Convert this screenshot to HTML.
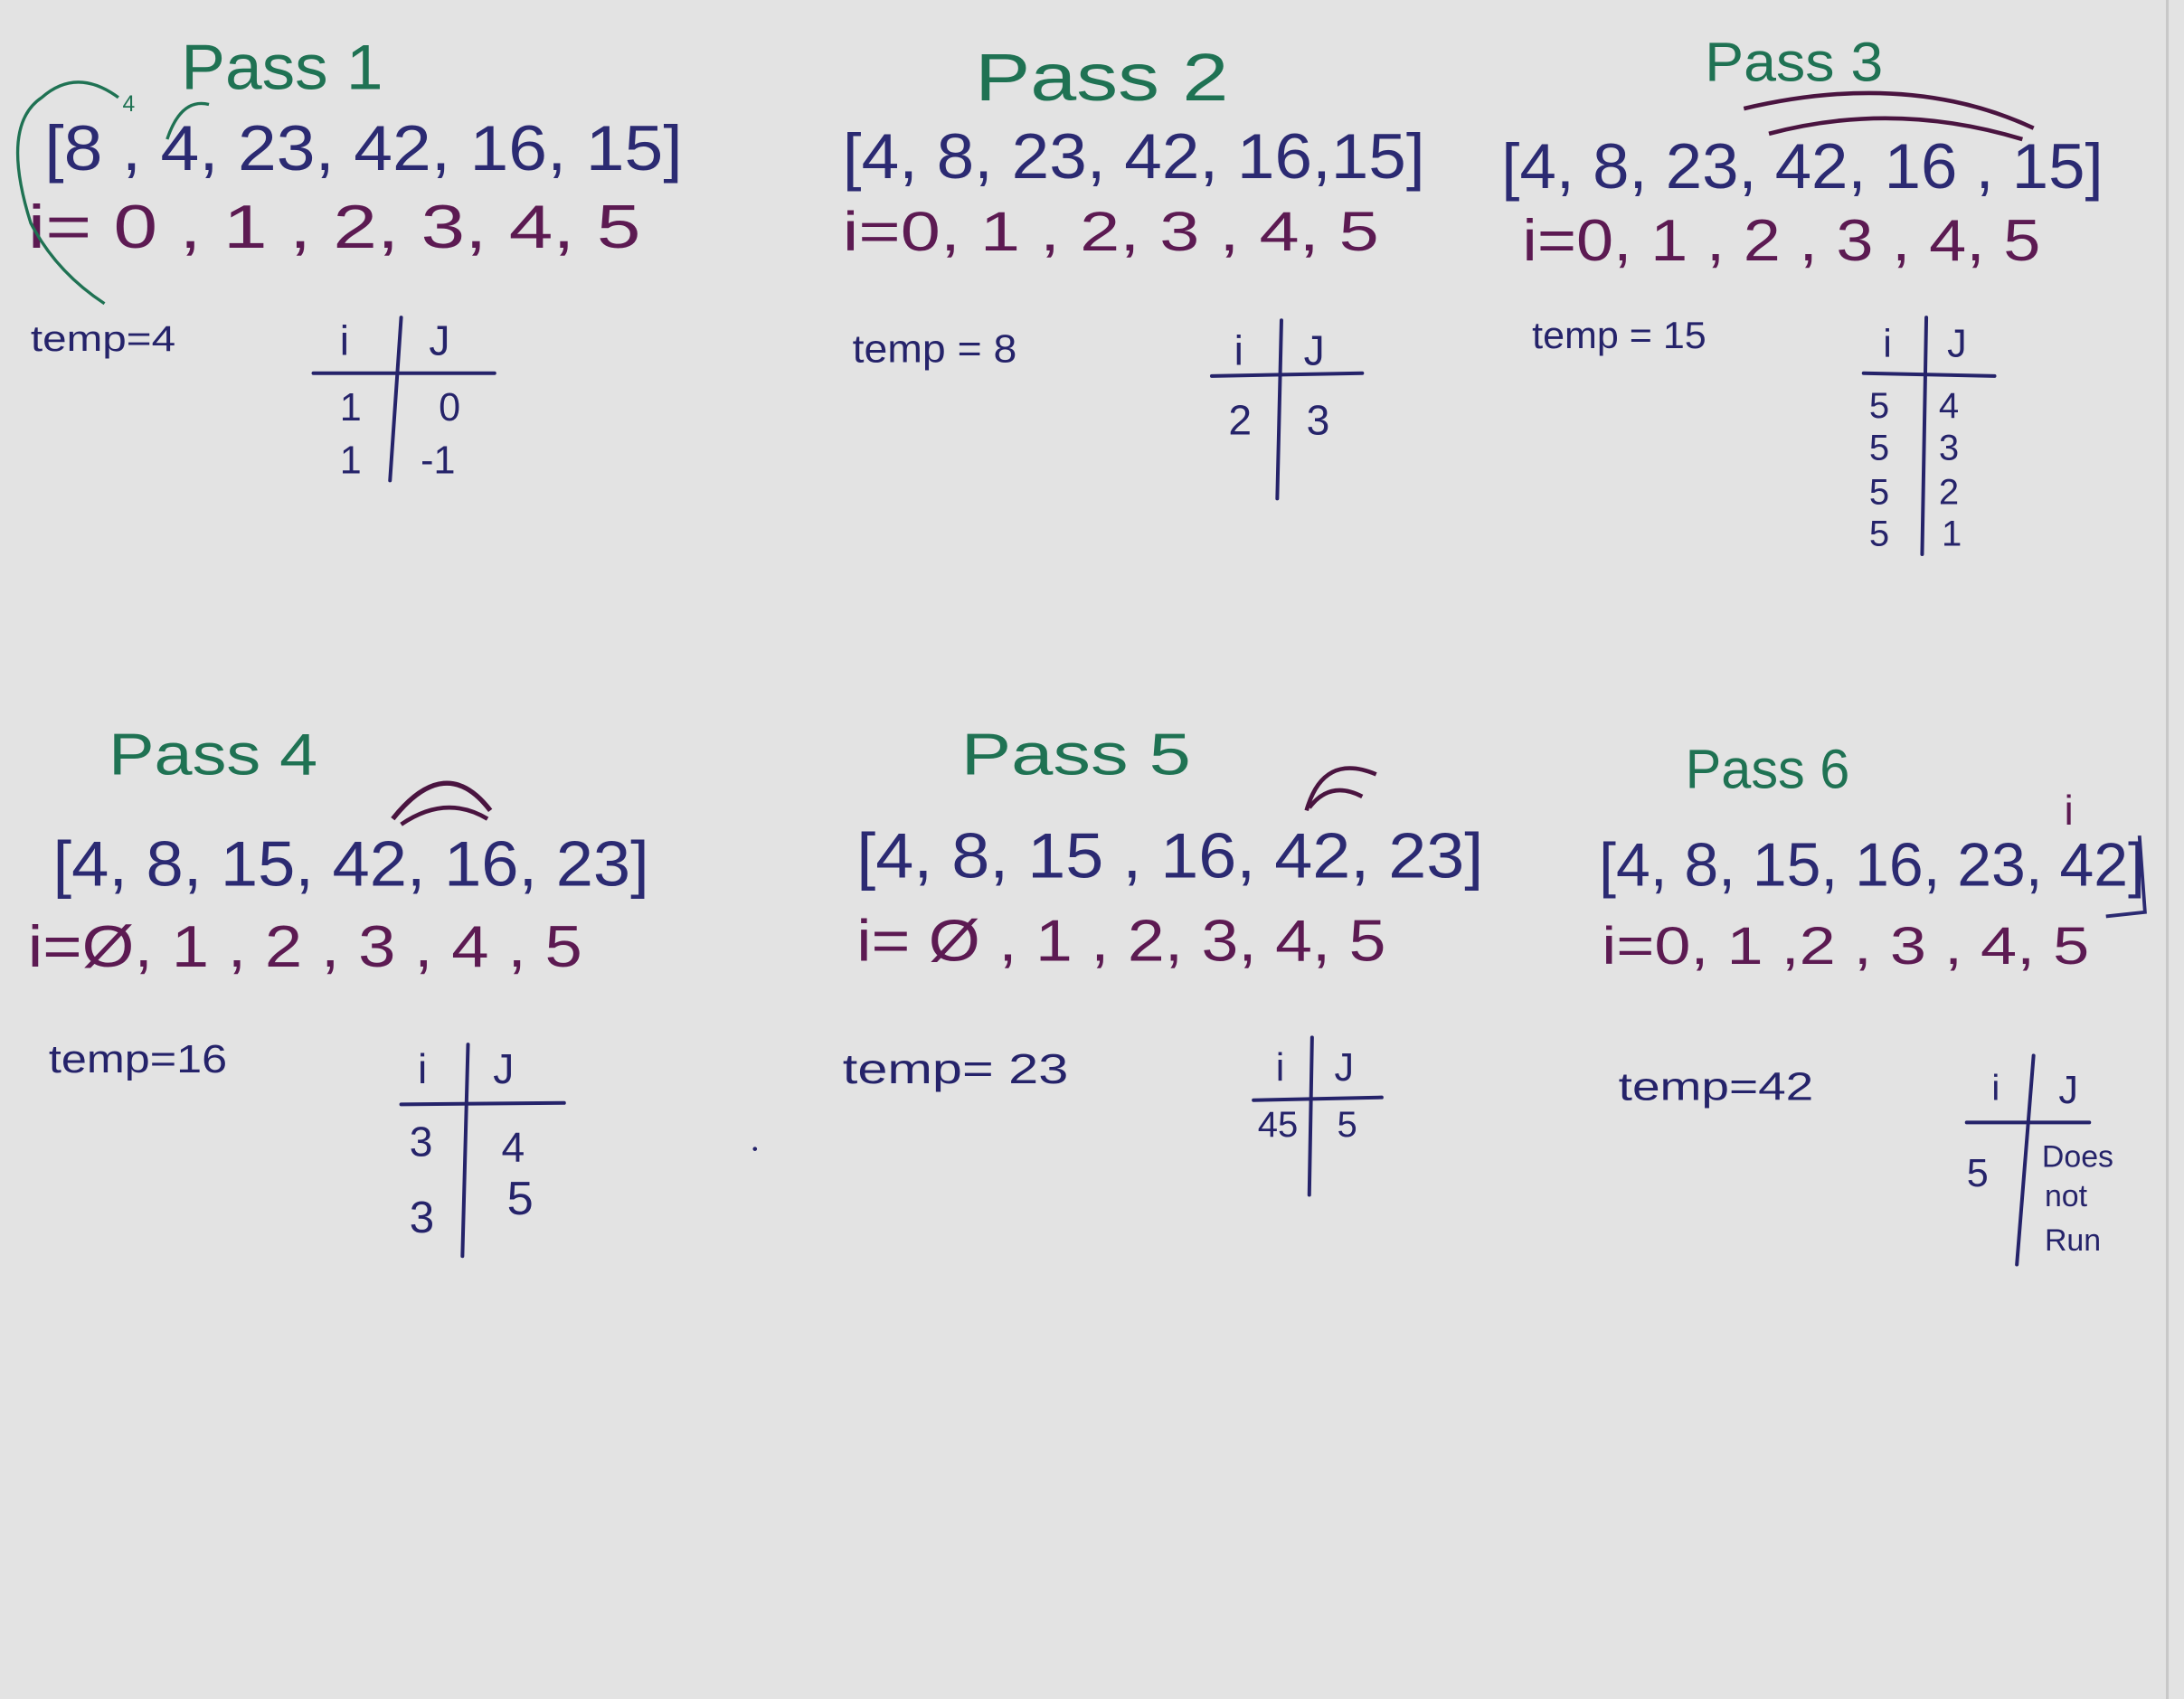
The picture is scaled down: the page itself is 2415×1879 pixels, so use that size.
<!DOCTYPE html>
<html><head><style>
html,body{margin:0;padding:0;background:#e3e3e3;overflow:hidden}
svg{display:block}
text{font-family:"Liberation Sans",sans-serif;font-weight:normal}
.g{fill:#1f7253}.b{fill:#2b2a72}.p{fill:#5c1a52}.n{fill:#25236a}
.ln{stroke:#25236a;stroke-width:2.6;fill:none;stroke-linecap:round}
</style></head><body>
<svg width="2415" height="1879" viewBox="0 0 1568 1220" xmlns="http://www.w3.org/2000/svg">
<rect width="1568" height="1220" fill="#e3e3e3"/>
<line x1="1556" y1="0" x2="1556" y2="1220" stroke="#c8c8c8" stroke-width="2"/>

<!-- Pass 1 -->
<text x="130" y="64" class="g" font-size="46" textLength="145" lengthAdjust="spacingAndGlyphs">Pass 1</text>
<text x="32" y="122" class="b" font-size="46" textLength="458" lengthAdjust="spacingAndGlyphs">[8 , 4, 23, 42, 16, 15]</text>
<text x="88" y="80" class="g" font-size="16">4</text>
<text x="20" y="178" class="p" font-size="44" textLength="440" lengthAdjust="spacingAndGlyphs">i= 0 , 1 , 2, 3, 4, 5</text>
<path d="M75 218 Q40 195 22 160 Q0 90 30 70 Q55 48 85 70" stroke="#1f7253" stroke-width="2.2" fill="none"/>
<path d="M120 100 Q130 70 150 75" stroke="#1f7253" stroke-width="2.2" fill="none"/>
<text x="22" y="252" class="n" font-size="26" textLength="104" lengthAdjust="spacingAndGlyphs">temp=4</text>
<text x="244" y="255" class="n" font-size="30">i</text><text x="308" y="255" class="n" font-size="30">J</text>
<line x1="288" y1="228" x2="280" y2="345" class="ln"/><line x1="225" y1="268" x2="355" y2="268" class="ln"/>
<text x="244" y="302" class="n" font-size="28">1</text><text x="315" y="302" class="n" font-size="28">0</text>
<text x="244" y="340" class="n" font-size="28">1</text><text x="302" y="340" class="n" font-size="28">-1</text>

<!-- Pass 2 -->
<text x="700" y="72" class="g" font-size="48" textLength="182" lengthAdjust="spacingAndGlyphs">Pass 2</text>
<text x="605" y="128" class="b" font-size="46" textLength="418" lengthAdjust="spacingAndGlyphs">[4, 8, 23, 42, 16,15]</text>
<text x="605" y="180" class="p" font-size="40" textLength="385" lengthAdjust="spacingAndGlyphs">i=0, 1 , 2, 3 , 4, 5</text>
<text x="612" y="260" class="n" font-size="28" textLength="118" lengthAdjust="spacingAndGlyphs">temp = 8</text>
<text x="886" y="262" class="n" font-size="30">i</text><text x="936" y="262" class="n" font-size="30">J</text>
<line x1="920" y1="230" x2="917" y2="358" class="ln"/><line x1="870" y1="270" x2="978" y2="268" class="ln"/>
<text x="882" y="312" class="n" font-size="30">2</text><text x="938" y="312" class="n" font-size="30">3</text>

<!-- Pass 3 -->
<text x="1224" y="58" class="g" font-size="40" textLength="128" lengthAdjust="spacingAndGlyphs">Pass 3</text>
<text x="1078" y="135" class="b" font-size="46" textLength="432" lengthAdjust="spacingAndGlyphs">[4, 8, 23, 42, 16 , 15]</text>
<path d="M1252 78 Q1370 50 1460 92" stroke="#4a1440" stroke-width="3" fill="none"/>
<path d="M1270 96 Q1360 72 1452 100" stroke="#4a1440" stroke-width="3" fill="none"/>
<text x="1093" y="187" class="p" font-size="42" textLength="372" lengthAdjust="spacingAndGlyphs">i=0, 1 , 2 , 3 , 4, 5</text>
<text x="1100" y="250" class="n" font-size="27" textLength="125" lengthAdjust="spacingAndGlyphs">temp = 15</text>
<text x="1352" y="256" class="n" font-size="28">i</text><text x="1398" y="256" class="n" font-size="28">J</text>
<line x1="1383" y1="228" x2="1380" y2="398" class="ln"/><line x1="1338" y1="268" x2="1432" y2="270" class="ln"/>
<g class="n" font-size="26"><text x="1342" y="300">5</text><text x="1392" y="300">4</text>
<text x="1342" y="330">5</text><text x="1392" y="330">3</text>
<text x="1342" y="362">5</text><text x="1392" y="362">2</text>
<text x="1342" y="392">5</text><text x="1394" y="392">1</text></g>

<!-- Pass 4 -->
<text x="78" y="556" class="g" font-size="42" textLength="150" lengthAdjust="spacingAndGlyphs">Pass 4</text>
<path d="M282 588 Q320 540 352 582" stroke="#4a1440" stroke-width="3.5" fill="none"/>
<path d="M288 592 Q320 570 350 588" stroke="#4a1440" stroke-width="3" fill="none"/>
<text x="38" y="636" class="b" font-size="46" textLength="428" lengthAdjust="spacingAndGlyphs">[4, 8, 15, 42, 16, 23]</text>
<text x="20" y="694" class="p" font-size="42" textLength="398" lengthAdjust="spacingAndGlyphs">i=Ø, 1 , 2 , 3 , 4 , 5</text>
<text x="35" y="770" class="n" font-size="28" textLength="128" lengthAdjust="spacingAndGlyphs">temp=16</text>
<text x="300" y="778" class="n" font-size="30">i</text><text x="354" y="778" class="n" font-size="30">J</text>
<line x1="336" y1="750" x2="332" y2="902" class="ln"/><line x1="288" y1="793" x2="405" y2="792" class="ln"/>
<text x="294" y="830" class="n" font-size="30">3</text><text x="360" y="834" class="n" font-size="30">4</text>
<text x="294" y="885" class="n" font-size="32">3</text><text x="364" y="872" class="n" font-size="34">5</text>

<!-- Pass 5 -->
<text x="690" y="556" class="g" font-size="42" textLength="165" lengthAdjust="spacingAndGlyphs">Pass 5</text>
<path d="M938 582 Q950 540 988 556" stroke="#4a1440" stroke-width="3" fill="none"/>
<path d="M940 580 Q955 560 978 572" stroke="#4a1440" stroke-width="3" fill="none"/>
<text x="615" y="630" class="b" font-size="46" textLength="450" lengthAdjust="spacingAndGlyphs">[4, 8, 15 , 16, 42, 23]</text>
<text x="615" y="690" class="p" font-size="42" textLength="380" lengthAdjust="spacingAndGlyphs">i= Ø , 1 , 2, 3, 4, 5</text>
<text x="605" y="778" class="n" font-size="30" textLength="162" lengthAdjust="spacingAndGlyphs">temp= 23</text>
<text x="916" y="776" class="n" font-size="28">i</text><text x="958" y="776" class="n" font-size="28">J</text>
<line x1="942" y1="745" x2="940" y2="858" class="ln"/><line x1="900" y1="790" x2="992" y2="788" class="ln"/>
<text x="903" y="816" class="n" font-size="26">45</text><text x="960" y="816" class="n" font-size="26">5</text>

<!-- Pass 6 -->
<text x="1210" y="566" class="g" font-size="40" textLength="118" lengthAdjust="spacingAndGlyphs">Pass 6</text>
<text x="1148" y="636" class="b" font-size="44" textLength="392" lengthAdjust="spacingAndGlyphs">[4, 8, 15, 16, 23, 42]</text>
<path d="M1536 600 L1540 655 L1512 658" stroke="#2b2a72" stroke-width="2.5" fill="none"/>
<text x="1482" y="592" class="p" font-size="30">i</text>
<text x="1150" y="692" class="p" font-size="38" textLength="350" lengthAdjust="spacingAndGlyphs">i=0, 1 ,2 , 3 , 4, 5</text>
<text x="1162" y="790" class="n" font-size="28" textLength="140" lengthAdjust="spacingAndGlyphs">temp=42</text>
<text x="1430" y="790" class="n" font-size="26">i</text><text x="1478" y="792" class="n" font-size="28">J</text>
<line x1="1460" y1="758" x2="1448" y2="908" class="ln"/><line x1="1412" y1="806" x2="1500" y2="806" class="ln"/>
<text x="1412" y="852" class="n" font-size="28">5</text>
<g class="n" font-size="22"><text x="1466" y="838">Does</text><text x="1468" y="866">not</text><text x="1468" y="898">Run</text></g>
<circle cx="542" cy="825" r="1.5" fill="#25236a"/>
</svg>
</body></html>
